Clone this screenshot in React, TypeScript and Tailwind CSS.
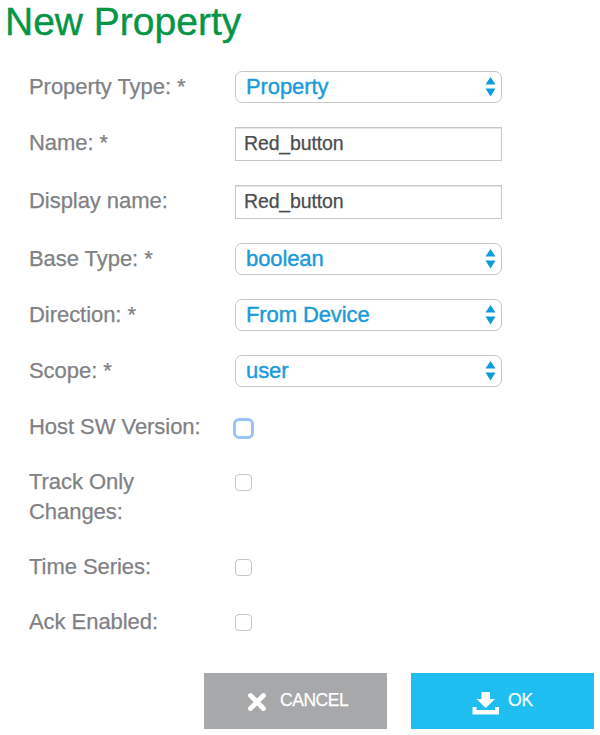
import type { ReactNode } from "react";

type RowProps = { label: string; required?: boolean; height: string; width?: string; children: ReactNode };

function Row({ label, required = false, height, width = "", children }: RowProps) {
  return (
    <div className={`flex items-start ${height}`}>
      <div className="w-[206px] shrink-0 pt-px">
        <div className={`text-[22px] leading-[30px] tracking-[-0.05px] text-[#808184] [-webkit-text-stroke:0.25px_#808184] ${width}`}>
          {label}
          {required && <span className="ml-[6px]">*</span>}
        </div>
      </div>
      {children}
    </div>
  );
}

function Select({ value }: { value: string }) {
  return (
    <div className="flex h-8 w-[267px] items-center justify-between rounded-[7px] border border-[#c6c6c6] bg-white pr-[5px] pl-[10px] text-[22px] leading-[30px] tracking-[-0.1px] text-[#1a9bd7] [-webkit-text-stroke:0.4px_#1a9bd7]">
      <span>{value}</span>
      <svg width="11" height="20" viewBox="0 0 11 20" fill="#109bdc" stroke="none">
        <path d="M5.5 0 L10.5 7.5 H0.5 Z M0.5 11.5 H10.5 L5.5 19.5 Z" />
      </svg>
    </div>
  );
}

function TextInput({ value }: { value: string }) {
  return (
    <div className="h-[34px] w-[267px] border border-[#c6c8c8] bg-white pl-2 text-[19.5px] leading-[31px] tracking-[-0.15px] text-[#4c4c4e] shadow-[inset_0_1px_0_#e6e7e7] [-webkit-text-stroke:0.25px_#4c4c4e]">
      {value}
    </div>
  );
}

function Checkbox({ focused = false }: { focused?: boolean }) {
  return focused ? (
    <div className="mt-[7px] -ml-[2px] size-[21px] rounded-[6px] border-[3px] border-[#9ac4f6] bg-white" />
  ) : (
    <div className="mt-2 size-[17px] rounded-[4px] border border-[#c5c5c5] bg-white" />
  );
}

export default function App() {
  return (
    <main className="h-[735px] w-[600px] overflow-hidden bg-white font-['Liberation_Sans',Arial,sans-serif]">
      <h1 className="h-[71px] pl-[5px] text-[39px] leading-[44px] text-[#069546] [-webkit-text-stroke:0.4px_#069546]">New Property</h1>
      <div className="pl-[29px]">
        <Row label="Property Type:" required height="h-14"><Select value="Property" /></Row>
        <Row label="Name:" required height="h-[58px]"><TextInput value="Red_button" /></Row>
        <Row label="Display name:" height="h-[58px]"><TextInput value="Red_button" /></Row>
        <Row label="Base Type:" required height="h-14"><Select value="boolean" /></Row>
        <Row label="Direction:" required height="h-14"><Select value="From Device" /></Row>
        <Row label="Scope:" required height="h-14"><Select value="user" /></Row>
        <Row label="Host SW Version:" height="h-[55px]"><Checkbox focused /></Row>
        <Row label="Track Only Changes:" height="h-[85px]" width="w-[150px]"><Checkbox /></Row>
        <Row label="Time Series:" height="h-[55px]"><Checkbox /></Row>
        <Row label="Ack Enabled:" height="h-[67px]"><Checkbox /></Row>
      </div>
      <div className="flex gap-6 pl-[204px] text-[17.5px] leading-5 text-white [-webkit-text-stroke:0.25px_white]">
        <div className="flex h-14 w-[183px] bg-[#a7a8aa] pt-[17px] pl-[43px]">
          <svg className="mt-[2px] mr-[13px] shrink-0" width="20" height="20" viewBox="0 0 20 20" stroke="white" strokeWidth="4.8" strokeLinecap="round">
            <path d="M3.5 3.5 L16.5 16.5 M16.5 3.5 L3.5 16.5" />
          </svg>
          <span className="tracking-[-0.45px]">CANCEL</span>
        </div>
        <div className="flex h-14 w-[183px] bg-[#1ebef0] pt-[17px] pl-[61px]">
          <svg className="mt-px mr-[9px] shrink-0" width="27" height="24" viewBox="0 0 27 24" fill="white" stroke="none">
            <path d="M9.5 1 H18 V8 H23 L13.7 17 L4.5 8 H9.5 Z M0.5 16 H4.5 V19 H23 V16 H27 V23.5 H0.5 Z" />
          </svg>
          <span>OK</span>
        </div>
      </div>
    </main>
  );
}
